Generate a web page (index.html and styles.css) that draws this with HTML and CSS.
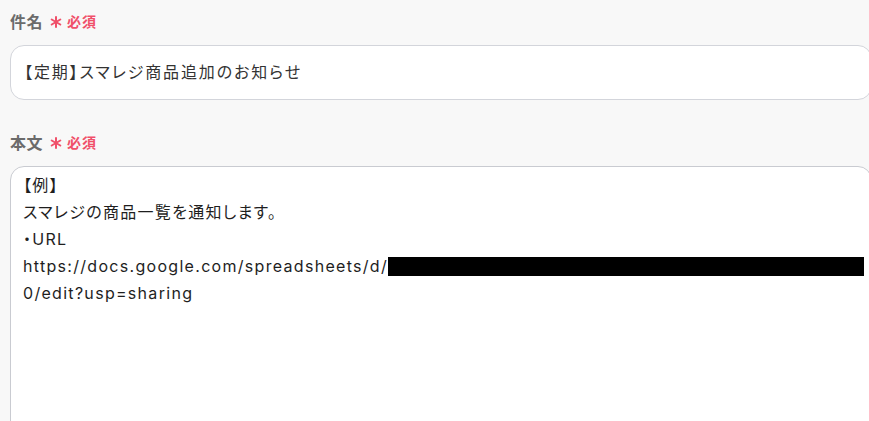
FILE: index.html
```html
<!DOCTYPE html>
<html lang="ja">
<head>
<meta charset="utf-8">
<link rel="stylesheet" href="styles.css">
</head>
<body>
<div class="form">
  <div class="field">
    <div class="label"><span class="name">件名</span><span class="req"><svg class="star" viewBox="0 0 12 12" width="12" height="12"><g stroke="#f0506a" stroke-width="2" stroke-linecap="round"><line x1="6" y1="1" x2="6" y2="11"/><line x1="1.7" y1="3.5" x2="10.3" y2="8.5"/><line x1="1.7" y1="8.5" x2="10.3" y2="3.5"/></g></svg>必須</span></div>
    <div class="input">【定期】スマレジ商品追加のお知らせ</div>
  </div>
  <div class="field">
    <div class="label"><span class="name">本文</span><span class="req"><svg class="star" viewBox="0 0 12 12" width="12" height="12"><g stroke="#f0506a" stroke-width="2" stroke-linecap="round"><line x1="6" y1="1" x2="6" y2="11"/><line x1="1.7" y1="3.5" x2="10.3" y2="8.5"/><line x1="1.7" y1="8.5" x2="10.3" y2="3.5"/></g></svg>必須</span></div>
    <div class="textarea">【例】<br>スマレジの商品一覧を通知します。<br>・URL<br>https://docs.google.com/spreadsheets/d/<span class="redact"></span>0/edit?usp=sharing</div>
  </div>
</div>
</body>
</html>
```
FILE: styles.css
```css
html, body {
  margin: 0;
  padding: 0;
  background: #f8f8f8;
  overflow: hidden;
}
body {
  width: 869px;
  height: 421px;
  font-family: Inter, "Noto Sans CJK JP", sans-serif;
}
.form {
  padding: 10px 0 0 10px;
  width: 862px;
}
.field {
  margin-bottom: 31px;
}
.label {
  display: flex;
  align-items: center;
  height: 22px;
  margin-bottom: 13px;
}
.name {
  font-size: 16px;
  font-weight: 700;
  color: #6b6b6b;
  letter-spacing: 0.5px;
}
.req {
  display: flex;
  align-items: center;
  color: #f0506a;
  font-size: 14px;
  font-weight: 700;
  margin-left: 7px;
  letter-spacing: 1px;
}
.star {
  margin-right: 5px;
  margin-top: 1px;
}
.input {
  box-sizing: border-box;
  height: 55px;
  background: #fff;
  border: 1px solid #d3d5db;
  border-radius: 14px;
  padding: 0 12px 3px 13px;
  display: flex;
  align-items: center;
  font-size: 16px;
  color: #333;
  letter-spacing: 1.9px;
  font-feature-settings: "palt";
}
.textarea {
  box-sizing: border-box;
  height: 300px;
  background: #fff;
  border: 1px solid #c9cbd1;
  border-radius: 14px;
  padding: 5px 3px 5px 12px;
  font-size: 16px;
  line-height: 27px;
  color: #1e1e1e;
  word-break: break-all;
  letter-spacing: 1.3px;
  font-feature-settings: "palt";
}
.redact {
  display: inline-block;
  width: 476px;
  height: 19px;
  background: #000;
  vertical-align: -4px;
}
```
